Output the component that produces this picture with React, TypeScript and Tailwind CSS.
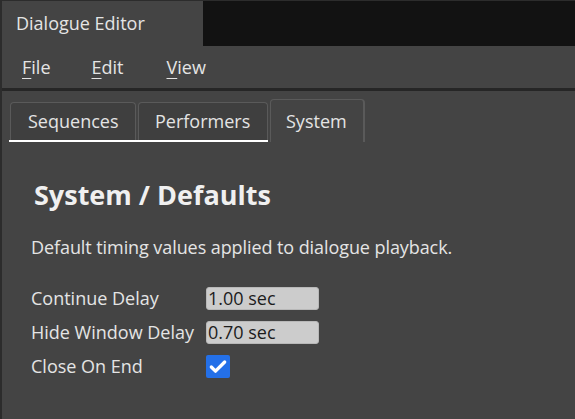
import { Check } from 'lucide-react';

const font = { fontFamily: '"Open Sans", "Noto Sans", sans-serif' };

function MenuItem({ first, rest }: { first: string; rest: string }) {
    return (
        <span className="text-[18px] leading-[24px] text-[#e4e4e4]">
            <span className="underline decoration-1 underline-offset-[4px]">{first}</span>
            {rest}
        </span>
    );
}

function Field({ label, children }: { label: string; children: React.ReactNode }) {
    return (
        <div className="flex items-center h-[23px]">
            <span className="w-[175px] text-[18px] leading-[23px] text-[#e4e4e4]">{label}</span>
            {children}
        </div>
    );
}

export default function App() {
    return (
        <div
            className="w-[575px] h-[419px] bg-[#444444] border-l-2 border-t border-[#2c2c2c] overflow-hidden flex flex-col"
            style={font}
        >
            {/* Title bar */}
            <div className="flex h-[45px]">
                <div className="w-[201px] bg-[#444444] flex items-center pl-[14px] text-[18px] text-[#e4e4e4]">
                    Dialogue Editor
                </div>
                <div className="flex-1 bg-[#121212]" />
            </div>

            {/* Menu bar */}
            <div className="h-[42px] flex items-center pl-[20px] gap-[40px]">
                <MenuItem first="F" rest="ile" />
                <div className="ml-[1px]">
                    <MenuItem first="E" rest="dit" />
                </div>
                <div className="ml-[3px]">
                    <MenuItem first="V" rest="iew" />
                </div>
            </div>
            <div className="h-[3px] bg-[#262626]" />

            {/* Tabs */}
            <div className="flex items-end pl-[7px] pt-[8px]">
                <div className="flex gap-[2px] border-b-2 border-white pl-[1px]">
                    <div className="w-[126px] h-[38px] rounded-t-[4px] border border-b-0 border-[#5a5a5a] bg-[#3f3f3f] pl-[17px] text-[18px] leading-[37px] text-[#e4e4e4]">
                        Sequences
                    </div>
                    <div className="w-[130px] h-[38px] rounded-t-[4px] border border-b-0 border-[#5a5a5a] bg-[#3f3f3f] pl-[16px] text-[18px] leading-[37px] text-[#e4e4e4]">
                        Performers
                    </div>
                </div>
                <div className="ml-[2px] w-[95px] h-[43px] rounded-t-[4px] border-t border-l border-r-2 border-[#5a5a5a] bg-[#444444] pl-[15px] text-[18px] leading-[42px] text-[#e4e4e4]">
                    System
                </div>
            </div>

            {/* Content */}
            <div className="pl-[29px] pt-[35px] flex flex-col">
                <h1 className="pl-[3px] text-[27px] font-bold leading-[36px] text-[#f0f0f0]">System / Defaults</h1>
                <p className="mt-[22px] text-[18px] leading-[24px] text-[#e4e4e4] tracking-[-0.08px]">
                    Default timing values applied to dialogue playback.
                </p>
                <div className="mt-[28px] flex flex-col gap-[11px]">
                    <Field label="Continue Delay">
                        <div className="w-[113px] h-[23px] rounded-[3px] bg-[#cccccc] border border-[#b8b8b8] pl-[1px] text-[18px] leading-[21px] text-[#1c1c1c]">
                            1.00 sec
                        </div>
                    </Field>
                    <Field label="Hide Window Delay">
                        <div className="w-[113px] h-[23px] rounded-[3px] bg-[#cccccc] border border-[#b8b8b8] pl-[1px] text-[18px] leading-[21px] text-[#1c1c1c]">
                            0.70 sec
                        </div>
                    </Field>
                    <Field label="Close On End">
                        <div className="w-[24px] h-[23px] rounded-[2px] bg-[#2470e8] flex items-center justify-center">
                            <Check className="w-[20px] h-[20px] text-white" strokeWidth={4} />
                        </div>
                    </Field>
                </div>
            </div>
        </div>
    );
}
